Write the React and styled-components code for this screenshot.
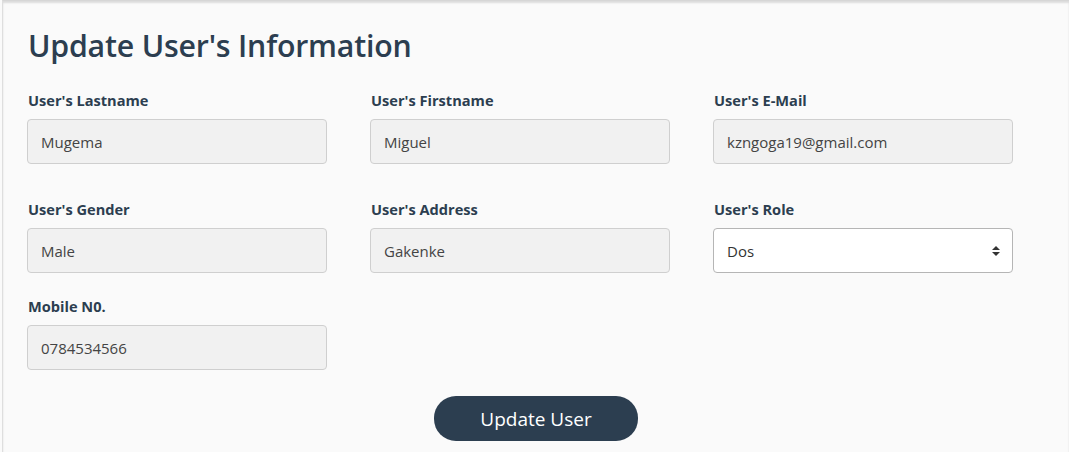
import React from 'react';
import styled, { createGlobalStyle } from 'styled-components';

const GlobalStyle = createGlobalStyle`
  * { box-sizing: border-box; }
  body {
    margin: 0;
    background: #fafafa;
    font-family: "Open Sans", "Noto Sans", sans-serif;
  }
`;

const Page = styled.div`
  min-height: 452px;
  margin-left: 2px;
  border-left: 1px solid #dedede;
  border-top: 1px solid #d6d6d6;
  box-shadow: inset 0 2px 2px rgba(0, 0, 0, 0.12);
  background: #fafafa;
  padding: 26px 0 0 24px;
`;

const Title = styled.h1`
  margin: 0 0 26px 1px;
  font-size: 30.3px;
  font-weight: 600;
  color: #2c3e50;
  letter-spacing: -0.2px;
  line-height: 38px;
`;

const Grid = styled.div`
  display: grid;
  grid-template-columns: repeat(3, 300px);
  column-gap: 43px;
  row-gap: ${p => p.$gap}px;
`;

const Field = styled.div`
  display: flex;
  flex-direction: column;
  gap: 10px;
`;

const Label = styled.label`
  font-size: 14.6px;
  font-weight: 700;
  color: #2c3e50;
  line-height: 18px;
  padding-left: 1px;
`;

const Input = styled.input`
  height: 45px;
  width: 300px;
  padding: 0 13px;
  font-family: inherit;
  font-size: 15px;
  color: #444;
  background: #f1f1f1;
  border: 1px solid #cfcfcf;
  border-radius: 4px;
  outline: none;
`;

const Select = styled.select`
  height: 45px;
  width: 300px;
  padding: 0 13px;
  font-family: inherit;
  font-size: 15px;
  color: #333;
  background: #fff url("data:image/svg+xml;utf8,<svg xmlns='http://www.w3.org/2000/svg' width='10' height='12' viewBox='0 0 10 12'><path d='M5 1 L9 5 H1 Z M5 11 L1 7 H9 Z' fill='%23333'/></svg>") no-repeat right 11px center;
  border: 1px solid #b5b5b5;
  border-radius: 4px;
  appearance: none;
  outline: none;
`;

const Actions = styled.div`
  display: flex;
  justify-content: center;
  width: 1018px;
  margin-top: 26px;
`;

const Button = styled.button`
  width: 204px;
  height: 45px;
  border: none;
  border-radius: 22px;
  background: #2c3e50;
  color: #fff;
  font-family: inherit;
  font-size: 19px;
  cursor: pointer;
`;

const fields = [
  { label: "User's Lastname", value: 'Mugema' },
  { label: "User's Firstname", value: 'Miguel' },
  { label: "User's E-Mail", value: 'kzngoga19@gmail.com' },
  { label: "User's Gender", value: 'Male' },
  { label: "User's Address", value: 'Gakenke' },
];

export default function App() {
  return (
    <>
      <GlobalStyle />
      <Page>
        <Title>Update User's Information</Title>
        <Grid $gap={36}>
          {fields.map(f => (
            <Field key={f.label}>
              <Label>{f.label}</Label>
              <Input defaultValue={f.value} readOnly />
            </Field>
          ))}
          <Field>
            <Label>User's Role</Label>
            <Select defaultValue="Dos">
              <option>Dos</option>
              <option>Admin</option>
              <option>Teacher</option>
            </Select>
          </Field>
        </Grid>
        <Grid $gap={0} style={{ marginTop: 24 }}>
          <Field>
            <Label>Mobile N0.</Label>
            <Input defaultValue="0784534566" readOnly />
          </Field>
        </Grid>
        <Actions>
          <Button>Update User</Button>
        </Actions>
      </Page>
    </>
  );
}
